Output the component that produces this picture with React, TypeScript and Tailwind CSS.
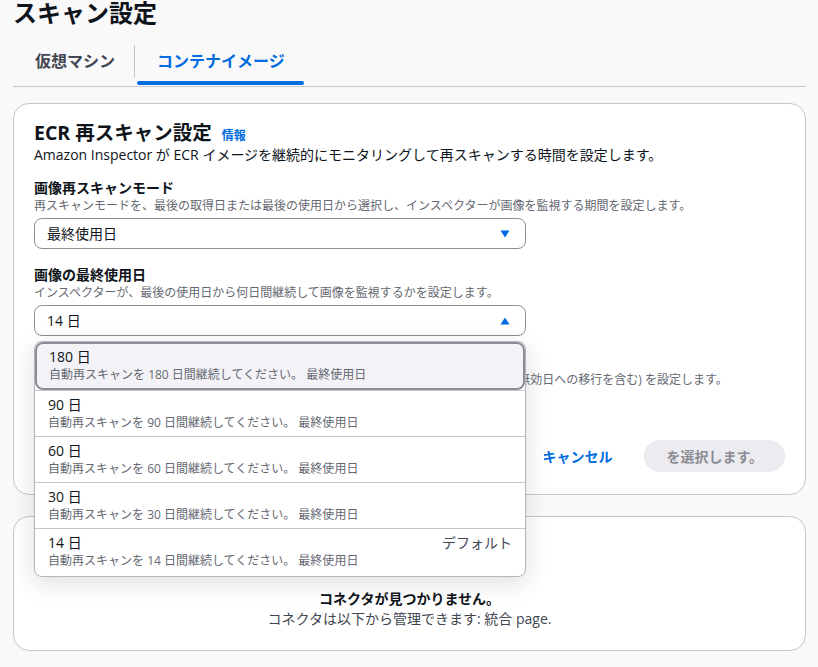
const options = [
  { value: '180 日', days: '180' },
  { value: '90 日', days: '90' },
  { value: '60 日', days: '60' },
  { value: '30 日', days: '30' },
  { value: '14 日', days: '14', tag: 'デフォルト' },
];

function Caret({ up }: { up?: boolean }) {
  return (
    <svg width="10" height="8" viewBox="0 0 10 8" className="shrink-0">
      {up ? <path d="M5 0.5 L9.5 7.5 L0.5 7.5 Z" fill="#006ce0" /> : <path d="M0.5 0.5 L9.5 0.5 L5 7.5 Z" fill="#006ce0" />}
    </svg>
  );
}

function Select({ value, up }: { value: string; up?: boolean }) {
  return (
    <div className="mt-[4px] flex h-[31px] w-[492px] items-center justify-between rounded-[8px] border border-[#8c8c94] bg-white pl-[12px] pr-[15px]">
      <span className="text-[14px] text-[#0f141a]">{value}</span>
      <Caret up={up} />
    </div>
  );
}

export default function App() {
  return (
    <div
      className="min-h-[667px] bg-[#f9f9fa] pb-[16px] pl-[13px] pr-[12px] text-[#0f141a]"
      style={{ fontFamily: '"Open Sans", "Noto Sans CJK JP", sans-serif' }}
    >
      <h1 className="-mt-[1px] text-[24px] font-bold leading-[28px]">スキャン設定</h1>

      {/* Tabs */}
      <div className="mt-[14px] flex border-b border-[#c6c6cd]">
        <div className="h-[45px] pl-[22px] pr-[19px] pt-[9px] text-[16px] font-bold leading-[22px] text-[#424650]">仮想マシン</div>
        <div className="mb-[8px] mt-[4px] w-px bg-[#c6c6cd]" />
        <div className="relative h-[45px] pl-[22px] pr-[21px] pt-[9px] text-[16px] font-bold leading-[22px] text-[#006ce0]">
          コンテナイメージ
          <div className="absolute bottom-[1px] left-[2px] right-[2px] h-[4px] rounded-full bg-[#006ce0]" />
        </div>
      </div>

      {/* ECR card */}
      <div className="mt-[16px] rounded-[16px] border border-[#c6c6cd] bg-white px-[20px] pb-[22px] pt-[17px]">
        <div className="flex items-baseline gap-[10px]">
          <h2 className="text-[19.5px] font-bold leading-[24px]">ECR 再スキャン設定</h2>
          <span className="text-[12px] font-bold text-[#006ce0]">情報</span>
        </div>
        <p className="text-[14px] leading-[20px]">
          Amazon Inspector が ECR イメージを継続的にモニタリングして再スキャンする時間を設定します。
        </p>

        <div className="mt-[13px]">
          <div className="text-[14px] font-bold leading-[20px]">画像再スキャンモード</div>
          <div className="text-[12px] leading-[16px] text-[#656871]">
            再スキャンモードを、最後の取得日または最後の使用日から選択し、インスペクターが画像を監視する期間を設定します。
          </div>
          <Select value="最終使用日" />
        </div>

        <div className="relative mt-[16px]">
          <div className="text-[14px] font-bold leading-[20px]">画像の最終使用日</div>
          <div className="text-[12px] leading-[16px] text-[#656871]">
            インスペクターが、最後の使用日から何日間継続して画像を監視するかを設定します。
          </div>
          <Select value="14 日" up />

          {/* Open dropdown */}
          <div className="absolute left-0 top-[76px] z-10 w-[492px] overflow-hidden rounded-[8px] border border-[#b4b4bb] bg-white shadow-[0_6px_24px_rgba(15,20,26,0.14)]">
            {options.map((o, i) => (
              <div
                key={o.value}
                className={
                  i === 0
                    ? 'rounded-[8px] border-2 border-[#8c8c94] bg-[#f3f3f7] px-[12px] pb-[5px] pt-[3px]'
                    : i === options.length - 1
                      ? 'border-t border-[#c6c6cd] px-[13px] pb-[7px] pt-[4px]'
                      : 'border-t border-[#c6c6cd] px-[13px] pb-[5px] pt-[4px]'
                }
              >
                <div className="flex justify-between text-[14px] leading-[20px]">
                  <span>{o.value}</span>
                  {o.tag && <span className="text-[#424650]">{o.tag}</span>}
                </div>
                <div className="text-[12px] leading-[16px] text-[#656871]">
                  自動再スキャンを {o.days} 日間継続してください。 最終使用日
                </div>
              </div>
            ))}
          </div>
        </div>

        <div className="mt-[16px]">
          <div className="text-[14px] font-bold leading-[20px]">画像のプル日</div>
          <div className="text-[12px] leading-[16px] text-[#656871]">
            インスペクターが、最後のプル日から何日間継続して画像を監視するか、その期間と条件 (無効日への移行を含む) を設定します。
          </div>
          <Select value="14 日" />
        </div>

        <div className="mt-[17px] flex justify-end gap-[12px]">
          <button className="h-[32px] rounded-full px-[20px] text-[14px] font-bold text-[#006ce0]">キャンセル</button>
          <button className="h-[32px] rounded-full bg-[#ebebf0] px-[22px] text-[14px] font-bold text-[#8c8c94]">を選択します。</button>
        </div>
      </div>

      {/* Connectors card */}
      <div className="mt-[21px] rounded-[16px] border border-[#c6c6cd] bg-white pb-[21px] pt-[72px] text-center">
        <div className="text-[14px] font-bold leading-[20px]">コネクタが見つかりません。</div>
        <div className="text-[14px] leading-[20px] text-[#424650]">コネクタは以下から管理できます: 統合 page.</div>
      </div>
    </div>
  );
}
